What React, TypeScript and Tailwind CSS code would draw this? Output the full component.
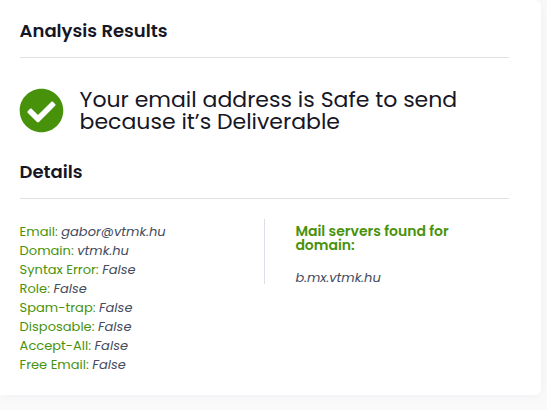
import React from 'react'
import { FaCheckCircle } from 'react-icons/fa'

const details = [
  { label: 'Email', value: 'gabor@vtmk.hu' },
  { label: 'Domain', value: 'vtmk.hu' },
  { label: 'Syntax Error', value: 'False' },
  { label: 'Role', value: 'False' },
  { label: 'Spam-trap', value: 'False' },
  { label: 'Disposable', value: 'False' },
  { label: 'Accept-All', value: 'False' },
  { label: 'Free Email', value: 'False' },
]

const mailServers = ['b.mx.vtmk.hu']

function SectionTitle({ children }: { children: React.ReactNode }) {
  return (
    <h3 className="border-b border-[#e1e1e1] pb-[14px] text-[18px] leading-[24px] font-semibold text-[#161625]">
      {children}
    </h3>
  )
}

export default function App() {
  return (
    <div className="h-[410px] overflow-hidden bg-[#fafafa] font-['Poppins','Inter',sans-serif]">
      <main className="h-[395px] w-[541px] rounded-r-[6px] bg-white pt-[19px] pl-[19.6px] shadow-[0_0_12px_rgba(80,100,150,0.08)]">
        <div className="w-[489px]">
          <SectionTitle>Analysis Results</SectionTitle>

          {/* Verdict */}
          <div className="flex items-center gap-4 pt-[30px] pb-[27px]">
            <FaCheckCircle className="-ml-px size-[45px] shrink-0 text-[#48920b]" />
            <p className="pt-px text-[22px] leading-[22px] text-[#161625]">
              Your email address is Safe to send
              <br />
              because it’s Deliverable
            </p>
          </div>

          <SectionTitle>Details</SectionTitle>

          <div className="flex pt-5">
            <ul className="w-[244.4px] pt-[3px] text-[13px] leading-[19px] tracking-[0.02px]">
              {details.map((item) => (
                <li key={item.label}>
                  <span className="text-[#48920b]">{item.label}: </span>
                  <em className="text-[#454c5e]">{item.value}</em>
                </li>
              ))}
            </ul>

            {/* Mail servers */}
            <div className="h-[65px] border-l border-[#dedee6] pt-[5px] pl-[30.4px]">
              <h4 className="text-[14px] leading-[14px] font-semibold text-[#48920b]">
                Mail servers found for
                <br />
                domain:
              </h4>
              {mailServers.map((server) => (
                <p key={server} className="mt-4 text-[13px] leading-[19px] text-[#454c5e] italic">
                  {server}
                </p>
              ))}
            </div>
          </div>
        </div>
      </main>
    </div>
  )
}
